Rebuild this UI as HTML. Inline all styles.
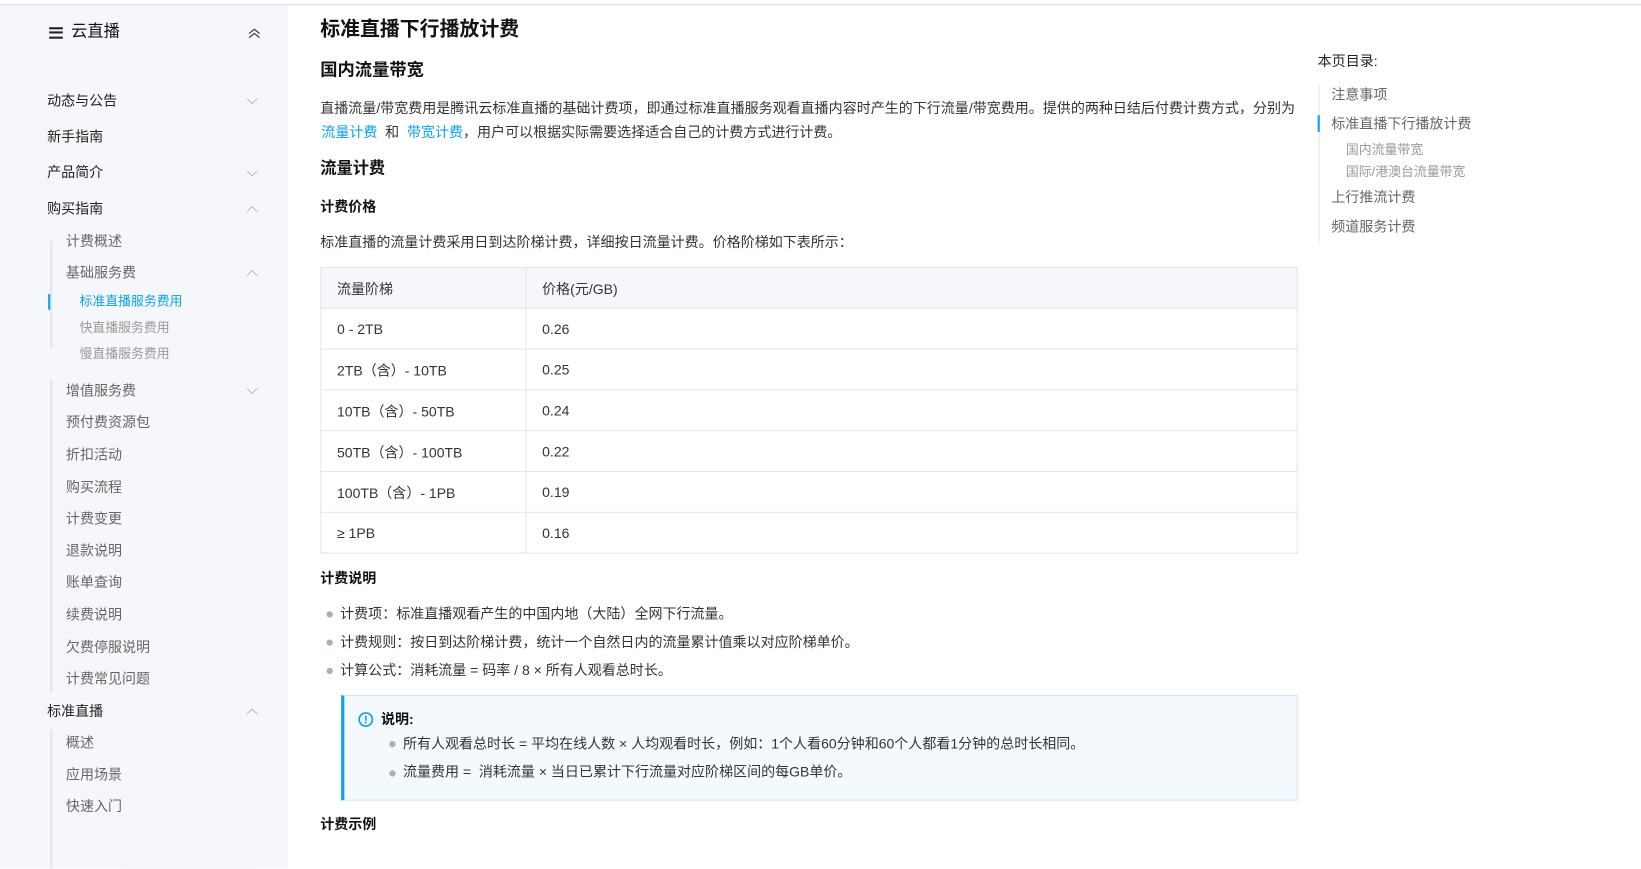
<!DOCTYPE html>
<html><head><meta charset="utf-8"><style>
*{margin:0;padding:0;box-sizing:border-box}
body{width:1641px;height:830px;overflow:hidden;background:#fff;font-family:"Liberation Sans","Noto Sans CJK SC",sans-serif;color:#333;position:relative}
#wrap{position:absolute;left:0;top:0;width:1568px;height:793px;transform:scale(1.0466);transform-origin:0 0}
.a{position:absolute;white-space:nowrap;line-height:1}
#top{position:absolute;left:0;top:4px;width:1641px;height:1px;background:#dcdcdc}
#side{position:absolute;left:0;top:5px;width:275px;height:825px;background:#f5f7fa}
.s1{font-size:13.4px;color:#222;left:45px}
.s2{font-size:13.4px;color:#666;left:63px}
.s3{font-size:12.3px;color:#999;left:76px}
.ch{position:absolute;left:236px;width:10px;height:6px}
.b{font-weight:bold;color:#111}
.p{font-size:13.4px;color:#333}
.blue{color:#0ca0f0}
table{position:absolute;left:306px;top:255px;width:934px;border-collapse:collapse;font-size:13.4px;color:#333}
td{border:1px solid #e3e6ed;height:39px;padding-left:15px}
tr:first-child td{background:#f5f7fa}
.dot{position:absolute;width:6px;height:6px;border-radius:3px;background:#aab0ba}
.toc{font-size:13.4px;color:#666;left:1272px}
.toc2{font-size:12.3px;color:#999;left:1286px}
</style></head><body>
<div id="wrap">
<div id="top"></div>
<div id="side"></div>
<div class="a" style="left:47px;top:26px;width:13px;height:2px;background:#222"></div>
<div class="a" style="left:47px;top:30px;width:13px;height:2px;background:#222"></div>
<div class="a" style="left:47px;top:35px;width:13px;height:2px;background:#222"></div>
<div class="a" style="left:68px;top:23px;font-size:15.5px;color:#111">云直播</div>
<svg class="a" style="left:237px;top:27px" width="12" height="10"><path d="M1 5 L6 1 L11 5 M1 9 L6 5 L11 9" fill="none" stroke="#444" stroke-width="1.2"/></svg>

<div class="a s1" style="top:90px">动态与公告</div>
<div class="a s1" style="top:124px">新手指南</div>
<div class="a s1" style="top:158px">产品简介</div>
<div class="a s1" style="top:193px">购买指南</div>
<svg class="ch" style="top:94px"><path d="M0 0 L5 5 L10 0" fill="none" stroke="#bbb"/></svg>
<svg class="ch" style="top:163px"><path d="M0 0 L5 5 L10 0" fill="none" stroke="#bbb"/></svg>
<svg class="ch" style="top:197px"><path d="M0 5.5 L5 0.5 L10 5.5" fill="none" stroke="#bbb"/></svg>
<div class="a" style="left:48px;top:230px;width:2px;height:102px;background:#e3e5ea"></div>
<div class="a" style="left:48px;top:362px;width:2px;height:300px;background:#e3e5ea"></div>
<div class="a" style="left:46px;top:281px;width:2px;height:15px;background:#0ca0f0"></div>
<div class="a s2" style="top:224px">计费概述</div>
<div class="a s2" style="top:254px">基础服务费</div>
<svg class="ch" style="top:258px"><path d="M0 5.5 L5 0.5 L10 5.5" fill="none" stroke="#bbb"/></svg>
<div class="a s3 blue" style="top:282px">标准直播服务费用</div>
<div class="a s3" style="top:307px">快直播服务费用</div>
<div class="a s3" style="top:332px">慢直播服务费用</div>
<div class="a s2" style="top:367px">增值服务费</div>
<svg class="ch" style="top:371px"><path d="M0 0 L5 5 L10 0" fill="none" stroke="#bbb"/></svg>
<div class="a s2" style="top:397px">预付费资源包</div>
<div class="a s2" style="top:428px">折扣活动</div>
<div class="a s2" style="top:459px">购买流程</div>
<div class="a s2" style="top:489px">计费变更</div>
<div class="a s2" style="top:520px">退款说明</div>
<div class="a s2" style="top:550px">账单查询</div>
<div class="a s2" style="top:581px">续费说明</div>
<div class="a s2" style="top:612px">欠费停服说明</div>
<div class="a s2" style="top:642px">计费常见问题</div>
<div class="a s1" style="top:673px">标准直播</div>
<svg class="ch" style="top:677px"><path d="M0 5.5 L5 0.5 L10 5.5" fill="none" stroke="#bbb"/></svg>
<div class="a" style="left:48px;top:697px;width:2px;height:133px;background:#e3e5ea"></div>
<div class="a s2" style="top:703px">概述</div>
<div class="a s2" style="top:734px">应用场景</div>
<div class="a s2" style="top:764px">快速入门</div>

<div class="a b" style="left:306px;top:19px;font-size:19px">标准直播下行播放计费</div>
<div class="a b" style="left:306px;top:59px;font-size:16.5px">国内流量带宽</div>
<div class="a p" style="left:306px;top:97px">直播流量/带宽费用是腾讯云标准直播的基础计费项，即通过标准直播服务观看直播内容时产生的下行流量/带宽费用。提供的两种日结后付费计费方式，分别为</div>
<div class="a p" style="left:307px;top:120px"><span class="blue">流量计费</span>&nbsp; 和 &nbsp;<span class="blue">带宽计费</span>，用户可以根据实际需要选择适合自己的计费方式进行计费。</div>
<div class="a b" style="left:306px;top:154px;font-size:15.5px">流量计费</div>
<div class="a b" style="left:306px;top:191px;font-size:13.4px">计费价格</div>
<div class="a p" style="left:306px;top:225px">标准直播的流量计费采用日到达阶梯计费，详细按日流量计费。价格阶梯如下表所示：</div>
<table>
<tr><td style="width:196px">流量阶梯</td><td>价格(元/GB)</td></tr>
<tr><td>0 - 2TB</td><td>0.26</td></tr>
<tr><td>2TB（含）- 10TB</td><td>0.25</td></tr>
<tr><td>10TB（含）- 50TB</td><td>0.24</td></tr>
<tr><td>50TB（含）- 100TB</td><td>0.22</td></tr>
<tr><td>100TB（含）- 1PB</td><td>0.19</td></tr>
<tr><td>≥ 1PB</td><td>0.16</td></tr>
</table>
<div class="a b" style="left:306px;top:546px;font-size:13.4px">计费说明</div>
<div class="dot" style="left:312px;top:584px"></div>
<div class="dot" style="left:312px;top:611px"></div>
<div class="dot" style="left:312px;top:638px"></div>
<div class="a p" style="left:325px;top:580px">计费项：标准直播观看产生的中国内地（大陆）全网下行流量。</div>
<div class="a p" style="left:325px;top:607px">计费规则：按日到达阶梯计费，统计一个自然日内的流量累计值乘以对应阶梯单价。</div>
<div class="a p" style="left:325px;top:634px">计算公式：消耗流量 = 码率 / 8 × 所有人观看总时长。</div>
<div class="a" style="left:326px;top:664px;width:914px;height:101px;background:#f4f9fe;border:1px solid #cfe6f8;border-left:3px solid #0ca0f0"></div>
<svg class="a" style="left:342px;top:680px" width="15" height="15"><circle cx="7.5" cy="7.5" r="6.3" fill="none" stroke="#0ca0f0" stroke-width="1.6"/><rect x="6.7" y="3.8" width="1.6" height="4.8" fill="#0ca0f0"/><rect x="6.7" y="9.6" width="1.6" height="1.6" fill="#0ca0f0"/></svg>
<div class="a b" style="left:364px;top:681px;font-size:13.4px">说明:</div>
<div class="dot" style="left:372px;top:708px"></div>
<div class="dot" style="left:372px;top:736px"></div>
<div class="a p" style="left:385px;top:704px">所有人观看总时长 = 平均在线人数 × 人均观看时长，例如：1个人看60分钟和60个人都看1分钟的总时长相同。</div>
<div class="a p" style="left:385px;top:731px">流量费用 =&nbsp; 消耗流量 × 当日已累计下行流量对应阶梯区间的每GB单价。</div>
<div class="a b" style="left:306px;top:781px;font-size:13.4px">计费示例</div>

<div class="a" style="left:1259px;top:52px;font-size:13.4px;color:#222">本页目录:</div>
<div class="a" style="left:1260px;top:81px;width:1px;height:150px;background:#e3e5ea"></div>
<div class="a" style="left:1259px;top:110px;width:2px;height:16px;background:#0ca0f0"></div>
<div class="a toc" style="top:84px">注意事项</div>
<div class="a toc blue" style="top:112px">标准直播下行播放计费</div>
<div class="a toc2" style="top:137px">国内流量带宽</div>
<div class="a toc2" style="top:158px">国际/港澳台流量带宽</div>
<div class="a toc" style="top:182px">上行推流计费</div>
<div class="a toc" style="top:210px">频道服务计费</div>
</div>
</body></html>
